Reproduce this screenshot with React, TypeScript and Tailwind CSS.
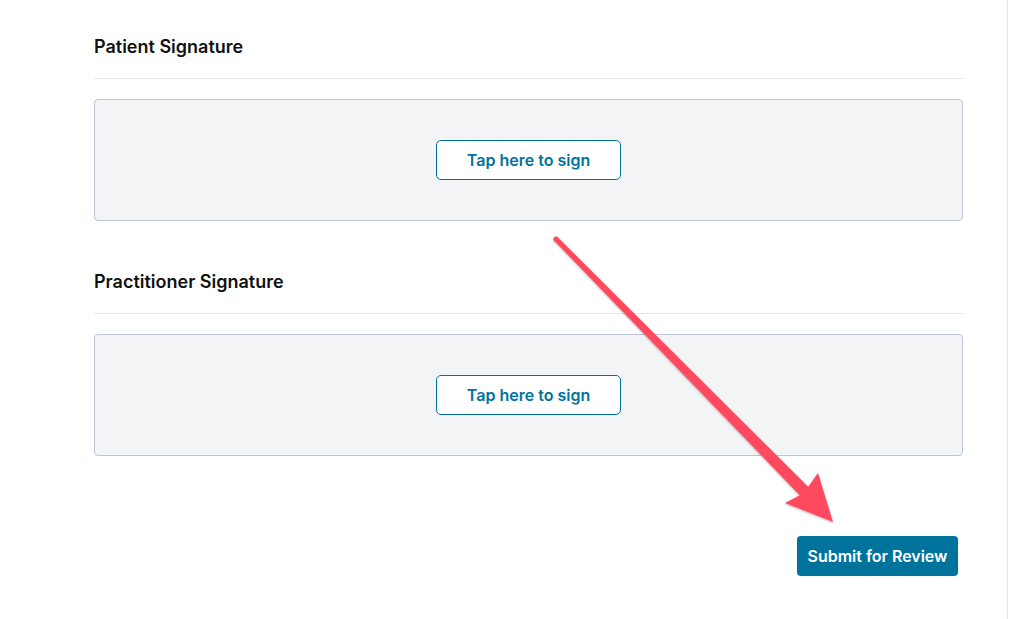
import React from "react";

const SignatureSection = ({title, className}: {title: string; className?: string}) => (
    <div className={className}>
        <h2 className="h-[24px] text-[18px] leading-[24px] font-semibold text-[#111111]">{title}</h2>
        <div className="mt-[19px] border-t border-[#e5e7eb]"></div>
        <div className="mt-[20px] h-[122px] rounded-[4px] border border-[#bcc6d6] bg-[#f3f4f6] flex items-center justify-center">
            <button className="w-[185px] h-[40px] rounded-[5px] border border-[#00739d] bg-white text-[16px] font-semibold text-[#00739d]">
                Tap here to sign
            </button>
        </div>
    </div>
);

const Arrow = () => (
    <svg className="absolute left-0 top-0 pointer-events-none" width="1010" height="619" viewBox="0 0 1010 619">
        <defs>
            <filter id="sh" x="-10%" y="-10%" width="120%" height="120%">
                <feDropShadow dx="0" dy="1" stdDeviation="1.2" floodColor="#000" floodOpacity="0.3"/>
            </filter>
        </defs>
        <g filter="url(#sh)" fill="#ff4a5f">
            <circle cx="556" cy="239" r="2.6"/>
            <polygon points="557.8,237.3 808.3,486.8 818,473 833,522 785,503 799.7,495.2 554.2,240.7"/>
        </g>
    </svg>
);

export default function App() {
    return (
        <div className="relative w-[1010px] h-[619px] bg-white overflow-hidden" style={{fontFamily: "Inter, 'Liberation Sans', sans-serif"}}>
            <div className="w-[1008px] h-[619px] border-r border-[#e5e7eb] pl-[94px] pr-[44px] pt-[35px]">
                <SignatureSection title="Patient Signature"/>
                <SignatureSection title="Practitioner Signature" className="mt-[49px]"/>
                <div className="mt-[80px] flex justify-end pr-[5px]">
                    <button className="w-[161px] h-[40px] rounded-[4px] bg-[#00739d] text-white text-[16px] font-semibold">
                        Submit for Review
                    </button>
                </div>
            </div>
            <Arrow/>
        </div>
    );
}
